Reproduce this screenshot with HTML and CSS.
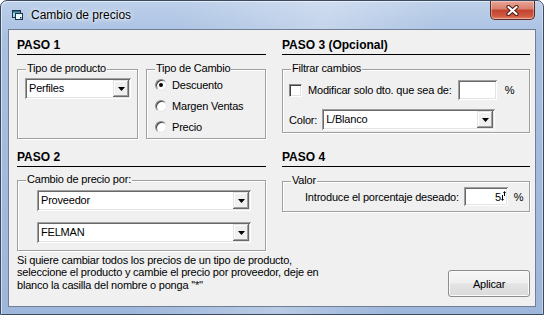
FILE: index.html
```html
<!DOCTYPE html>
<html lang="es">
<head>
<meta charset="utf-8">
<title>Cambio de precios</title>
<link rel="stylesheet" href="styles.css">
</head>
<body>
<div class="window">
  <div class="titlebar">
    <svg class="app-icon" viewBox="0 0 11 10" width="11" height="10">
      <rect x="0.5" y="0.5" width="8" height="7" fill="#9fdbe8" stroke="#1d3447"/>
      <rect x="1" y="1" width="7" height="1.6" fill="#2d6b88"/>
      <rect x="3.5" y="3.5" width="7" height="6" fill="#e6fbff" stroke="#1d3447"/>
      <rect x="8" y="7" width="1.5" height="1.5" fill="#1d3447"/>
    </svg>
    <span class="title">Cambio de precios</span>
    <div class="close">
      <svg width="13" height="11" viewBox="0 0 13 11">
        <path d="M2.5 2L10.5 9M10.5 2L2.5 9" stroke="#4b1a12" stroke-width="4.2" stroke-linecap="round"/>
        <path d="M2.5 2L10.5 9M10.5 2L2.5 9" stroke="#ffffff" stroke-width="2.2" stroke-linecap="round"/>
      </svg>
    </div>
  </div>

  <div class="client">
    <div class="grid">
      <div class="heading">PASO 1</div>
      <div class="heading">PASO 3 (Opcional)</div>

      <div class="pair">
        <div class="group g-producto">
          <span class="legend">Tipo de producto</span>
          <div class="combo w-perfiles">
            <span class="combo-text">Perfiles</span>
            <span class="combo-btn"><svg width="7" height="4" viewBox="0 0 7 4"><path d="M0 0H7L3.5 4Z" fill="#000"/></svg></span>
          </div>
        </div>
        <div class="group g-tipo">
          <span class="legend">Tipo de Cambio</span>
          <div class="radio-row"><span class="radio"><span class="dot"></span></span><span>Descuento</span></div>
          <div class="radio-row"><span class="radio"></span><span>Margen Ventas</span></div>
          <div class="radio-row"><span class="radio"></span><span>Precio</span></div>
        </div>
      </div>

      <div class="group g-filtrar">
        <span class="legend">Filtrar cambios</span>
        <div class="filtrar-row">
          <span class="check"></span>
          <span class="check-label">Modificar solo dto. que sea de:</span>
          <span class="field w-dto"></span>
          <span class="pct">%</span>
        </div>
        <div class="color-row">
          <span>Color:</span>
          <div class="combo w-color">
            <span class="combo-text">L/Blanco</span>
            <span class="combo-btn"><svg width="7" height="4" viewBox="0 0 7 4"><path d="M0 0H7L3.5 4Z" fill="#000"/></svg></span>
          </div>
        </div>
      </div>

      <div class="heading step2">PASO 2</div>
      <div class="heading step2">PASO 4</div>

      <div class="group g-cambio">
        <span class="legend">Cambio de precio por:</span>
        <div class="combo w-prov">
          <span class="combo-text">Proveedor</span>
          <span class="combo-btn"><svg width="7" height="4" viewBox="0 0 7 4"><path d="M0 0H7L3.5 4Z" fill="#000"/></svg></span>
        </div>
        <div class="combo w-prov second">
          <span class="combo-text">FELMAN</span>
          <span class="combo-btn"><svg width="7" height="4" viewBox="0 0 7 4"><path d="M0 0H7L3.5 4Z" fill="#000"/></svg></span>
        </div>
      </div>

      <div class="group g-valor">
        <span class="legend">Valor</span>
        <div class="valor-row">
          <span class="valor-label">Introduce el porcentaje deseado:</span>
          <span class="field w-valor">
            <span>5</span>
            <svg class="spin" width="5" height="11" viewBox="0 0 5 11">
              <path d="M3.5 0L5 2H4V5H3V2H2Z" fill="#000"/>
              <path d="M1 4H2V8H3L1.5 10L0 8H1Z" fill="#000"/>
            </svg>
          </span>
          <span class="pct">%</span>
        </div>
      </div>

      <div class="footer">
        <p class="help">Si quiere cambiar todos los precios de un tipo de producto,<br>seleccione el producto y cambie el precio por proveedor, deje en<br>blanco la casilla del nombre o ponga ''*''</p>
        <button class="btn" type="button">Aplicar</button>
      </div>
    </div>
  </div>
</div>
</body>
</html>
```

FILE: styles.css
```css
* { box-sizing: border-box; }

html, body {
  margin: 0;
  padding: 0;
}

body {
  width: 544px;
  height: 315px;
  overflow: hidden;
  background: #ffffff;
  font-family: "Liberation Sans", Arial, sans-serif;
  font-size: 11px;
  letter-spacing: -0.2px;
  color: #000;
}

.window {
  width: 544px;
  height: 315px;
  border: 1px solid #3b4a60;
  border-radius: 7px 7px 0 0;
  display: flex;
  flex-direction: column;
  background:
    linear-gradient(100deg, rgba(255,255,255,0) 30%, rgba(255,255,255,0.28) 55%, rgba(255,255,255,0) 75%),
    linear-gradient(180deg, #bdd0ea 0%, #a9c0e1 12%, #a2badd 60%, #9db6da 100%);
  box-shadow: inset 1px 1px 0 rgba(255,255,255,0.55), inset -1px 0 0 rgba(255,255,255,0.4);
}

/* title bar */
.titlebar {
  height: 28px;
  flex: none;
  display: flex;
  align-items: center;
  padding: 0 8px 0 11px;
}

.app-icon {
  flex: none;
  display: block;
}

.title {
  margin-left: 8px;
  font-size: 12px;
  letter-spacing: 0;
  color: #000;
  text-shadow: 0 0 6px #ffffff, 0 0 3px rgba(255,255,255,0.9);
}

.close {
  margin-left: auto;
  align-self: flex-start;
  width: 45px;
  height: 19px;
  border: 1px solid #5b2a22;
  border-top: none;
  border-radius: 0 0 5px 5px;
  background: linear-gradient(180deg, #e7a596 0%, #d98270 42%, #c3442e 52%, #cf5a42 85%, #e08a6c 100%);
  box-shadow: inset 0 0 0 1px rgba(255,255,255,0.35);
  display: flex;
  align-items: center;
  justify-content: center;
}

/* client area */
.client {
  margin: 0 7px;
  height: 278px;
  flex: none;
  border: 1px solid #6f7f96;
  background: #f0f0f0;
  padding: 8px 5px 0 8px;
}

.grid {
  display: grid;
  grid-template-columns: 249px 248px;
  column-gap: 16px;
  align-items: start;
}

.heading {
  font-weight: bold;
  font-size: 12px;
  line-height: 14px;
  letter-spacing: 0;
  padding-bottom: 2px;
  border-bottom: 1px solid #000;
}

.step2 { margin-top: 11px; }

/* group boxes */
.group {
  position: relative;
  border: 1px solid #a0a0a0;
  box-shadow: inset 1px 1px 0 #ffffff, 1px 1px 0 #ffffff;
}

.legend {
  position: absolute;
  top: -8px;
  left: 8px;
  padding: 0 1px;
  line-height: 13px;
  background: #f0f0f0;
  white-space: nowrap;
}

.pair {
  margin-top: 14px;
  display: flex;
  gap: 8px;
}

.g-producto {
  width: 121px;
  height: 70px;
  padding: 8px 0 0 7px;
}

.g-tipo {
  width: 120px;
  height: 70px;
  padding: 4px 0 0 8px;
}

.g-filtrar {
  margin-top: 14px;
  height: 64px;
  padding: 10px 0 0 6px;
}

.g-cambio {
  margin-top: 13px;
  height: 71px;
  padding: 9px 0 0 19px;
}

.g-valor {
  margin-top: 14px;
  height: 31px;
  padding: 5px 0 0 22px;
}

/* combo boxes */
.combo {
  display: flex;
  height: 21px;
  padding: 2px;
  background: #ffffff;
  box-shadow:
    inset 1px 1px 0 #a0a0a0,
    inset -1px -1px 0 #ffffff,
    inset 2px 2px 0 #696969,
    inset -2px -2px 0 #e3e3e3;
}

.combo-text {
  flex: 1;
  padding-left: 2px;
  line-height: 17px;
  white-space: nowrap;
}

.combo-btn {
  width: 16px;
  height: 17px;
  flex: none;
  background: #f0f0f0;
  display: flex;
  align-items: center;
  justify-content: center;
  box-shadow:
    inset -1px -1px 0 #696969,
    inset 1px 1px 0 #e3e3e3,
    inset -2px -2px 0 #a0a0a0,
    inset 2px 2px 0 #ffffff;
}

.w-perfiles { width: 106px; }
.w-color { width: 173px; margin-left: 5px; }
.w-prov { width: 214px; }
.second { margin-top: 11px; }

/* radios */
.radio-row {
  height: 21px;
  display: flex;
  align-items: center;
}

.radio {
  width: 12px;
  height: 12px;
  margin-right: 5px;
  flex: none;
  border-radius: 50%;
  background: #ffffff;
  border: 1px solid;
  border-color: #8a8a8a #e6e6e6 #e6e6e6 #8a8a8a;
  box-shadow: inset 1px 1px 0 #404040;
  display: flex;
  align-items: center;
  justify-content: center;
}

.dot {
  width: 4px;
  height: 4px;
  border-radius: 50%;
  background: #000;
}

/* filtrar */
.filtrar-row {
  height: 20px;
  display: flex;
  align-items: center;
}

.check {
  width: 13px;
  height: 13px;
  flex: none;
  background: #ffffff;
  border: 1px solid;
  border-color: #8a8a8a #ffffff #ffffff #8a8a8a;
  box-shadow: inset 1px 1px 0 #404040, inset -1px -1px 0 #e3e3e3;
}

.check-label { margin-left: 6px; white-space: nowrap; }

.field {
  display: flex;
  background: #ffffff;
  box-shadow:
    inset 1px 1px 0 #a0a0a0,
    inset -1px -1px 0 #ffffff,
    inset 2px 2px 0 #696969,
    inset -2px -2px 0 #e3e3e3;
}

.w-dto {
  width: 39px;
  height: 20px;
  margin-left: 6px;
}

.pct { margin-left: 8px; }

.color-row {
  margin-top: 9px;
  display: flex;
  align-items: center;
}

/* valor */
.valor-row {
  display: flex;
  align-items: center;
  height: 19px;
}

.valor-label { white-space: nowrap; }

.w-valor {
  width: 44px;
  height: 19px;
  margin-left: 5px;
  padding-right: 2px;
  align-items: center;
  justify-content: flex-end;
  gap: 0;
}

.spin { display: block; }

.g-valor .pct { margin-left: 6px; }

/* footer */
.footer {
  grid-column: 1 / -1;
  margin-top: 3px;
  display: flex;
  justify-content: space-between;
  align-items: flex-start;
}

.help {
  margin: 0;
  line-height: 12.3px;
}

.btn {
  width: 82px;
  height: 27px;
  margin-top: 16px;
  padding: 0;
  border: 1px solid #8c8c8c;
  border-radius: 3px;
  background: linear-gradient(180deg, #f7f7f7 0%, #efefef 48%, #e4e4e4 52%, #dadada 100%);
  box-shadow: inset 0 0 0 1px #fbfbfb;
  font-family: "Liberation Sans", Arial, sans-serif;
  font-size: 11px;
  letter-spacing: -0.2px;
  color: #000;
}
```
